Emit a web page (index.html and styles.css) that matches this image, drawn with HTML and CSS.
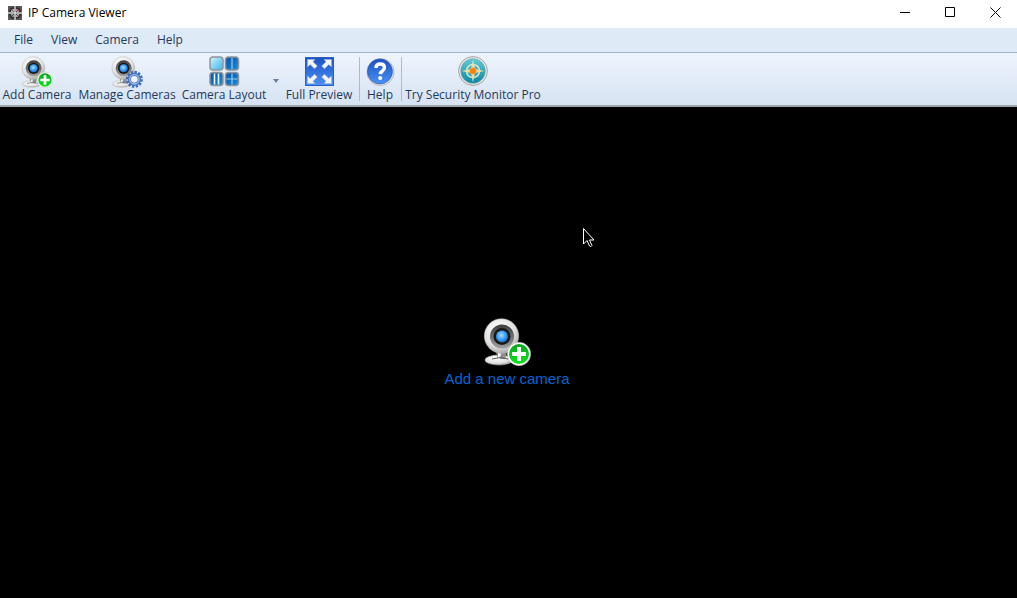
FILE: index.html
```
<!DOCTYPE html>
<html lang="en">
<head>
  <meta charset="UTF-8">
  <meta name="viewport" content="width=device-width, initial-scale=1.0">
  <title>IP Camera Viewer</title>
  <link rel="stylesheet" href="styles.css">
</head>
<body>
  <!-- Shared drawings -->
  <svg class="defs" aria-hidden="true">
    <defs>
      <radialGradient id="shell" cx="40%" cy="30%" r="75%">
        <stop offset="0" stop-color="#ffffff"/>
        <stop offset=".65" stop-color="#e2e1df"/>
        <stop offset="1" stop-color="#a5a4a2"/>
      </radialGradient>
      <linearGradient id="ring" x1="0" y1="0" x2="0" y2="1">
        <stop offset="0" stop-color="#3c3c3c"/>
        <stop offset="1" stop-color="#a0a0a0"/>
      </linearGradient>
      <radialGradient id="lens" cx="45%" cy="40%" r="65%">
        <stop offset="0" stop-color="#a5dcff"/>
        <stop offset=".6" stop-color="#3598ee"/>
        <stop offset="1" stop-color="#0f5cba"/>
      </radialGradient>
      <linearGradient id="green" x1="0" y1="0" x2="0" y2="1">
        <stop offset="0" stop-color="#0aa51c"/>
        <stop offset="1" stop-color="#0be51a"/>
      </linearGradient>
      <linearGradient id="blue" x1="0" y1="0" x2="0" y2="1">
        <stop offset="0" stop-color="#1c50c4"/>
        <stop offset="1" stop-color="#4a92f4"/>
      </linearGradient>
      <linearGradient id="sky" x1="0" y1="0" x2="1" y2="1">
        <stop offset="0" stop-color="#d3f4ff"/>
        <stop offset="1" stop-color="#35b3ec"/>
      </linearGradient>
      <linearGradient id="tile" x1="0" y1="0" x2="1" y2="1">
        <stop offset="0" stop-color="#0a4fa8"/>
        <stop offset="1" stop-color="#188fdc"/>
      </linearGradient>
      <linearGradient id="teal" x1="0" y1="0" x2="0" y2="1">
        <stop offset="0" stop-color="#62cbd8"/>
        <stop offset="1" stop-color="#0c86a2"/>
      </linearGradient>
      <symbol id="webcam" viewBox="0 0 48 48">
        <ellipse cx="16" cy="42" rx="14" ry="5" fill="url(#shell)" stroke="#a8a8a8" stroke-width=".6"/>
        <path d="M13 34h11l-2 7h-7z" fill="#8d8d8d"/>
        <path d="M15 35h3l-1 6h-2z" fill="#f3f3f3"/>
        <path d="M9 41q8-3 16 0" fill="none" stroke="#5a5a5a" stroke-width="1"/>
        <circle cx="18.500" cy="18" r="17.200" fill="url(#shell)" stroke="#b5b4b2" stroke-width=".6"/>
        <circle cx="19" cy="18.500" r="12" fill="url(#ring)"/>
        <circle cx="19" cy="18.500" r="8.500" fill="#181818"/>
        <circle cx="19" cy="18.500" r="6" fill="url(#lens)"/>
      </symbol>
      <symbol id="plus" viewBox="0 0 48 48">
        <circle cx="36" cy="36" r="11.700" fill="#fff" stroke="#aaa" stroke-width=".5"/>
        <circle cx="36" cy="36" r="10" fill="url(#green)"/>
        <path d="M34 29h4v5h5v4h-5v5h-4v-5h-5v-4h5z" fill="#fff"/>
      </symbol>
    </defs>
  </svg>

  <header class="titlebar">
    <svg class="app-icon" viewBox="0 0 14 14" aria-hidden="true">
      <rect width="14" height="14" fill="#5b5658"/>
      <path d="M2 6q0-4 4-4M8 2q4 0 4 4M2 8q0 4 4 4M8 12q4 0 4-4" fill="none" stroke="#2e2a2c" stroke-width="1.500"/>
      <path d="M3 6q0-3 3-3v3z" fill="#c9b9bd"/>
      <path d="M8 3q3 0 3 3H8z" fill="#cf8794"/>
      <path d="M3 8h3v3q-3 0-3-3z" fill="#6cab78"/>
      <path d="M8 8h3q0 3-3 3z" fill="#b9a9b4"/>
      <path d="M4 4l6 6M10 4l-6 6" stroke="#4a4346" stroke-width=".8"/>
      <path d="M7 0v14M0 7h14" stroke="#fff" stroke-width="1"/>
    </svg>
    <h1>IP Camera Viewer</h1>
    <div class="window-buttons">
      <button type="button" aria-label="Minimize">
        <svg viewBox="0 0 12 12"><path d="M1 5.500h10"/></svg>
      </button>
      <button type="button" aria-label="Maximize">
        <svg viewBox="0 0 12 12"><path d="M1.500 .5h9v9h-9z"/></svg>
      </button>
      <button type="button" aria-label="Close">
        <svg viewBox="0 0 12 12"><path d="M1.500 .5l10 10M11.500 .5l-10 10"/></svg>
      </button>
    </div>
  </header>

  <nav class="menubar">
    <button type="button">File</button>
    <button type="button">View</button>
    <button type="button">Camera</button>
    <button type="button">Help</button>
  </nav>

  <div class="toolbar">
    <button type="button" class="tool add">
      <svg viewBox="0 0 48 48"><use href="#webcam"/><use href="#plus"/></svg>
      <span>Add Camera</span>
    </button>
    <button type="button" class="tool manage">
      <svg viewBox="0 0 48 48">
        <use href="#webcam"/>
        <circle cx="35" cy="35" r="10.800" fill="none" stroke="#3d69b5" stroke-width="4" stroke-dasharray="3.400 2.250"/>
        <circle cx="35" cy="35" r="7.500" fill="#eef4fc" stroke="#4373c0" stroke-width="5"/>
        <circle cx="35" cy="35" r="7" fill="none" stroke="#9dbcea" stroke-width="2"/>
      </svg>
      <span>Manage Cameras</span>
    </button>
    <button type="button" class="tool layout">
      <svg viewBox="0 0 32 32">
        <g stroke="#8f959b" stroke-width="1.500">
          <rect x="2" y="1" width="13" height="13" rx="3" fill="url(#sky)"/>
          <rect x="17.500" y="1" width="13" height="13" rx="3" fill="url(#tile)"/>
          <rect x="2" y="16.500" width="13" height="13" rx="3" fill="url(#tile)"/>
          <rect x="17.500" y="16.500" width="13" height="13" rx="3" fill="url(#tile)"/>
        </g>
        <path d="M24 2v11M24 17.500v11M18.500 23h11" stroke="#8fcdf2" stroke-width="1.200"/>
        <path d="M6.500 17.500v11M10.500 17.500v11" stroke="#e4f5ff" stroke-width="1.600"/>
      </svg>
      <span>Camera Layout</span>
    </button>
    <button type="button" class="tool-arrow" aria-label="Layout options">
      <svg viewBox="0 0 6 4"><path d="M0 0h6L3 4z"/></svg>
    </button>
    <button type="button" class="tool preview">
      <svg viewBox="0 0 32 32">
        <rect x="2.500" y="1.500" width="28" height="28" fill="url(#blue)" stroke="#2a5fc4"/>
        <g fill="#f4f4f2" stroke="#a8b8d4" stroke-width=".4">
          <path id="arrow" d="M4.500 3.500h7.500l-2 2.200 4.300 4.300-2.800 2.800-4.300-4.300-2.700 2.500z"/>
          <use href="#arrow" transform="matrix(-1 0 0 1 33 0)"/>
          <use href="#arrow" transform="matrix(1 0 0 -1 0 31)"/>
          <use href="#arrow" transform="matrix(-1 0 0 -1 33 31)"/>
        </g>
      </svg>
      <span>Full Preview</span>
    </button>
    <div class="separator"></div>
    <button type="button" class="tool help">
      <svg viewBox="0 0 32 32">
        <circle cx="16.500" cy="16" r="13.500" fill="#f2f2f2" stroke="#b3b3b3"/>
        <circle cx="16" cy="15.500" r="12.500" fill="url(#blue)" stroke="#2451ae" stroke-width=".6"/>
        <path d="M12 12q0-4 4.200-4t4.200 3.700q0 2-2 3.300t-2.100 3.200" fill="none" stroke="#fff" stroke-width="3.400"/>
        <circle cx="16.200" cy="22" r="2" fill="#fff"/>
      </svg>
      <span>Help</span>
    </button>
    <div class="separator"></div>
    <button type="button" class="tool pro">
      <svg viewBox="0 0 32 32">
        <circle cx="16" cy="15" r="14.400" fill="#eceae7" stroke="#a5a29e"/>
        <circle cx="16" cy="15" r="12.300" fill="url(#teal)" stroke="#5fa3ad" stroke-width=".6"/>
        <circle cx="16" cy="15" r="6.500" fill="none" stroke="#d8e4c8" stroke-width="1.600"/>
        <path d="M16 3.500l2 9.500 9.500 2-9.500 2-2 9.500-2-9.500-9.500-2 9.500-2z" fill="#ecdcae"/>
        <circle cx="16" cy="15" r="3.300" fill="#f98208" stroke="#f6b050" stroke-width=".6"/>
      </svg>
      <span>Try Security Monitor Pro</span>
    </button>
  </div>

  <main class="viewer">
    <a class="add-camera" href="#">
      <svg viewBox="0 0 48 48" aria-hidden="true"><use href="#webcam"/><use href="#plus"/></svg>
      <span>Add a new camera</span>
    </a>
    <svg class="pointer" viewBox="0 0 12 20" aria-hidden="true">
      <path d="M.5.500v15.500l3.500-3.500 2.500 5.500q1.500 1.500 2.500-.5l-2.500-5.500h4.500z"/>
    </svg>
  </main>
</body>
</html>
```
FILE: styles.css
```
* {
  box-sizing: border-box;
}

body {
  display: flex;
  flex-direction: column;
  min-height: 100vh;
  margin: 0;
  background-color: #000;
  color: #1e395b;
  font-family: "Segoe UI", "Open Sans", sans-serif;
  font-size: 12px;
  line-height: 16px;
}

button {
  margin: 0;
  padding: 0;
  border: none;
  background: none;
  color: inherit;
  font: inherit;
  white-space: nowrap;
}

.defs {
  position: absolute;
  width: 0;
  height: 0;
}

/* Title bar */
.titlebar {
  display: flex;
  align-items: center;
  height: 28px;
  padding-left: 8px;
  padding-bottom: 3px;
  background-color: #fff;
  color: #000;
}

.app-icon {
  width: 14px;
  height: 14px;
  margin-right: 6px;
}

.titlebar h1 {
  margin: 0;
  font-size: 12px;
  font-weight: normal;
}

.window-buttons {
  display: flex;
  margin-left: auto;
}

.window-buttons button {
  display: flex;
  align-items: center;
  justify-content: center;
  width: 45px;
  height: 24px;
}

.window-buttons svg {
  width: 12px;
  height: 12px;
  fill: none;
  stroke: #000;
}

/* Menu */
.menubar {
  display: flex;
  height: 25px;
  padding-left: 5px;
  background-color: #deeaf6;
  border-bottom: 1px solid #9db2d0;
}

.menubar button {
  padding: 0 9px;
}

/* Toolbar */
.toolbar {
  display: flex;
  height: 54px;
  background: linear-gradient(#edf4fd, #d7e3f2);
  border-bottom: 2px solid #a0a5ac;
}

.tool {
  display: flex;
  flex-direction: column;
  align-items: center;
  padding-top: 3px;
}

.tool svg {
  flex: none;
  width: 32px;
  height: 32px;
}

.tool span {
  margin-top: -1px;
}

.add {
  width: 74px;
}

.manage {
  width: 106px;
}

.layout {
  width: 88px;
}

.tool-arrow {
  width: 16px;
}

.tool-arrow svg {
  width: 6px;
  height: 4px;
  fill: #67809f;
}

.preview {
  width: 70px;
}

.help {
  width: 40px;
}

.pro {
  width: 142px;
}

.separator {
  width: 1px;
  margin: 4px 0 4px 5px;
  background-color: #a9bad2;
}

.separator + .help {
  margin-right: -4px;
}

/* Camera area */
.viewer {
  position: relative;
  display: flex;
  flex: 1;
  align-items: center;
  justify-content: center;
  padding-right: 3px;
}

.add-camera {
  display: flex;
  flex-direction: column;
  align-items: center;
  gap: 4px;
  color: #0066d6;
  font-family: Arial, "Liberation Sans", sans-serif;
  font-size: 15px;
  line-height: 18px;
  text-decoration: none;
}

.add-camera svg {
  width: 48px;
  height: 48px;
}

.pointer {
  position: absolute;
  top: 121px;
  left: 583px;
  width: 12px;
  height: 20px;
  fill: #000;
  stroke: #fff;
}
```
